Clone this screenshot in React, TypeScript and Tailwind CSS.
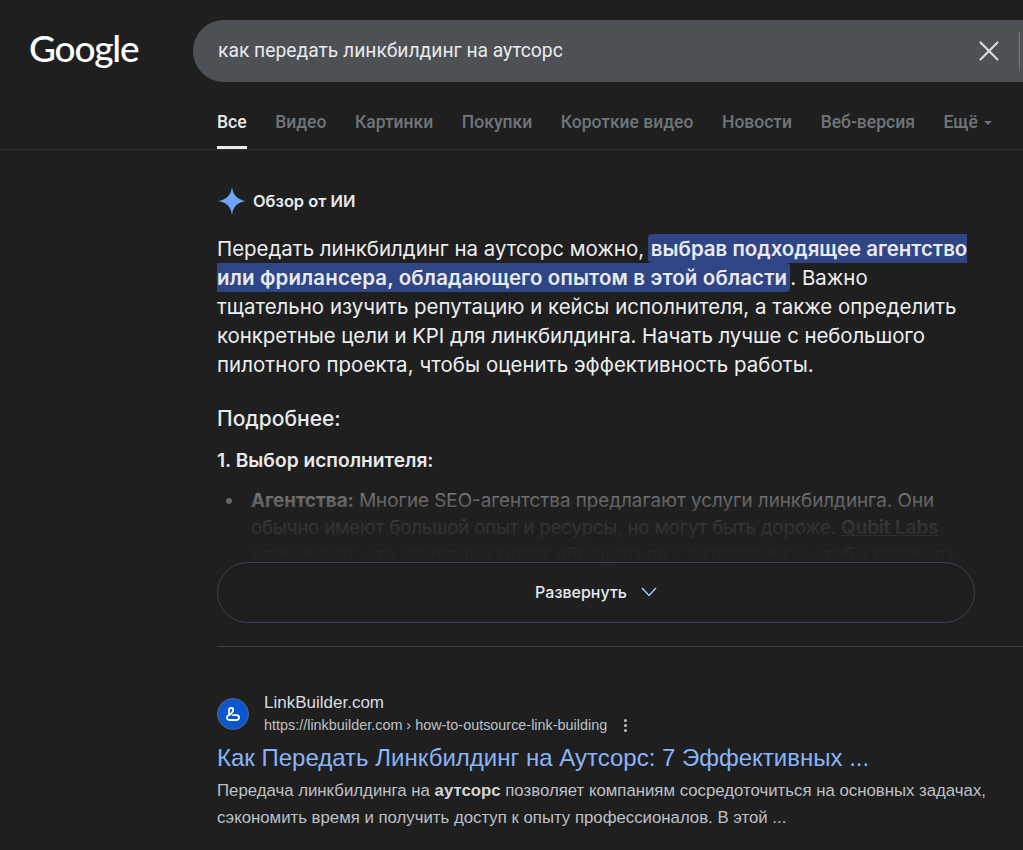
import { X } from "lucide-react";

const tabs = ["Видео", "Картинки", "Покупки", "Короткие видео", "Новости", "Веб-версия"];

function AiStar() {
  return (
    <svg viewBox="0 0 28 28" className="ml-px h-[28px] w-[28px] shrink-0">
      <path d="M14 0C14.8 8 20 13.2 28 14C20 14.8 14.8 20 14 28C13.2 20 8 14.8 0 14C8 13.2 13.2 8 14 0Z" fill="#6ea4fa" />
    </svg>
  );
}

function LinkBuilderIcon() {
  return (
    <svg viewBox="0 0 18 18" className="h-[18px] w-[18px]" fill="none" stroke="#fff" strokeWidth="1.8" strokeLinecap="round" strokeLinejoin="round">
      <path d="M5 10V5.2C5 3.9 6 3 7.1 3C8.3 3 9.2 3.9 9.2 5C9.2 6 8.7 6.7 7.8 7.8L6.2 9.6" />
      <path d="M5 10C3.6 10.4 3 11.4 3 12.6C3 14 4 15 5.4 15H12.6C14 15 15 14 15 12.6C15 11.2 14 10.2 12.6 10.2H9" />
    </svg>
  );
}

export default function App() {
  return (
    <div className="h-[850px] w-[1023px] overflow-hidden bg-[#1f1f1f] font-['Inter',sans-serif]">
      <header className="flex items-start pt-[20px]">
        <div className="w-[193px] pl-[29px] font-['Lato',sans-serif] text-[37px] leading-[56px] font-medium tracking-[-1.2px] text-white">
          Google
        </div>
        <div className="flex h-[62px] flex-1 items-center rounded-l-full bg-[#4d5156] pl-[25px] font-['Roboto',sans-serif] text-[19.3px] text-[#e8eaed]">
          <span className="flex-1">как передать линкбилдинг на аутсорс</span>
          <X className="mr-[13px] size-[34px] text-[#dadce0]" strokeWidth={1.5} />
          <div className="mr-[3px] h-[39px] w-px bg-[#70757a]" />
        </div>
      </header>

      <nav className="mt-[21px] flex h-[47px] items-start gap-[28.6px] border-b border-[#303134] pl-[217px] font-['Roboto',sans-serif] text-[17.5px] leading-[39px] font-medium text-[#70757a]">
        <span className="h-[46px] border-b-[3px] border-[#e8eaed] text-[#e8eaed]">Все</span>
        {tabs.map((t) => (
          <span key={t}>{t}</span>
        ))}
        <span className="flex items-center gap-[6px]">
          Ещё
          <span className="mt-[1px] h-0 w-0 border-x-[4px] border-t-[4px] border-x-transparent border-t-[#70757a]" />
        </span>
      </nav>

      <main className="ml-[217px]">
        <div className="flex items-center gap-[7px] pt-[37px] text-[16.4px] font-semibold text-[#e8eaed]">
          <AiStar />
          Обзор от ИИ
        </div>

        <p className="mt-[19px] w-[790px] text-[20.45px] leading-[29px] text-[#eceef0]">
          Передать линкбилдинг на аутсорс можно,{" "}
          <mark className="ml-[-2px] rounded-[4px] bg-[#2f4585] px-[3px] py-[2px] font-semibold text-[#e8eaed]">
            выбрав подходящее агентство
            <br />
            <span className="tracking-[0.15px]">или фрилансера, обладающего опытом в этой области</span>
          </mark>
          . Важно
          <br />
          тщательно изучить репутацию и кейсы исполнителя, а также определить
          <br />
          <span className="tracking-[-0.08px]">конкретные цели и KPI для линкбилдинга. Начать лучше с небольшого</span>
          <br />
          <span className="tracking-[0.06px]">пилотного проекта, чтобы оценить эффективность работы.</span>
        </p>

        <h2 className="mt-[25px] text-[21px] leading-[29px] font-medium text-[#e8eaed]">Подробнее:</h2>
        <h3 className="mt-[14px] text-[19.2px] leading-[27px] font-semibold text-[#e8eaed]">1. Выбор исполнителя:</h3>

        <div className="relative mt-[13px] h-[75px] overflow-hidden">
          <ul className="w-[790px] pl-[34px] text-[18.8px] leading-[27px] text-[#e8eaed]">
            <li className="relative">
              <span className="absolute top-[11px] left-[-25px] size-[6px] rounded-full bg-[#e8eaed]" />
              <b className="font-bold">Агентства:</b> Многие SEO-агентства предлагают услуги линкбилдинга. Они
              <br />
              <span className="tracking-[-0.22px]">обычно имеют большой опыт и ресурсы, но могут быть дороже.</span>{" "}
              <span className="font-semibold underline">Qubit Labs</span>
              <br />
              упоминают, что компании могут обращаться к аутсорсингу, чтобы получить
            </li>
          </ul>
          <div className="absolute inset-0 bg-gradient-to-b from-[#1f1f1f]/50 via-[#1f1f1f]/90 to-[#1f1f1f]" />
        </div>

        <button className="flex h-[61px] w-[758px] items-center justify-center gap-[14px] rounded-full border border-[#3c4257] pb-[2px] text-[16px] font-medium text-[#e8eaed]">
          Развернуть
          <svg viewBox="0 0 16 10" className="h-[10px] w-[16px]" fill="none" stroke="#a8c7fa" strokeWidth="1.5">
            <path d="M1 1L8 8.5L15 1" />
          </svg>
        </button>

        <div className="mt-[23px] border-t border-[#3c4043]" />

        <div className="mt-[45px] flex items-center gap-[15px] font-['Liberation_Sans',sans-serif]">
          <div className="flex size-[32px] items-center justify-center rounded-full border border-[#5f6368] bg-[#0b57d0]">
            <LinkBuilderIcon />
          </div>
          <div>
            <div className="text-[17px] leading-[22px] text-[#dadce0]">LinkBuilder.com</div>
            <div className="flex items-center text-[14.4px] leading-[22px] text-[#bdc1c6]">
              https://linkbuilder.com › how-to-outsource-link-building
              <span className="ml-[17px] flex flex-col gap-[2px]">
                <i className="size-[3px] rounded-full bg-[#bdc1c6]" />
                <i className="size-[3px] rounded-full bg-[#bdc1c6]" />
                <i className="size-[3px] rounded-full bg-[#bdc1c6]" />
              </span>
            </div>
          </div>
        </div>

        <div className="font-['Liberation_Sans',sans-serif]">
          <h3 className="mt-[5px] text-[24px] leading-[34px] text-[#8ab4f8]">
            Как Передать Линкбилдинг на Аутсорс: 7 Эффективных ...
          </h3>
          <p className="mt-[2px] w-[800px] text-[16.8px] leading-[27px] text-[#bdc1c6]">
            Передача линкбилдинга на <b className="text-[#d0d3d8]">аутсорс</b> позволяет компаниям сосредоточиться на основных задачах,
            <br />
            сэкономить время и получить доступ к опыту профессионалов. В этой ...
          </p>
        </div>
      </main>
    </div>
  );
}
